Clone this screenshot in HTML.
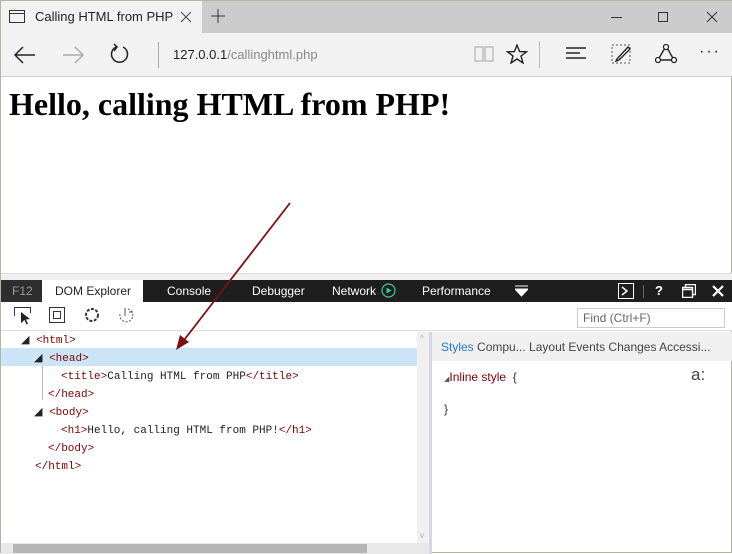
<!DOCTYPE html>
<html><head><style>
*{margin:0;padding:0;box-sizing:border-box}
body{width:732px;height:553px;overflow:hidden;position:relative;background:#fff;font-family:"Liberation Sans",sans-serif;border:1px solid #b8b3a0}
.a{position:absolute}
.mono{font-family:"Liberation Mono",monospace;font-size:11px;color:#222}
.t{color:#800000}
</style></head><body>
<div class="a" style="left:0;top:0;width:732px;height:32px;background:#cccccc"></div>
<div class="a" style="left:0;top:0;width:201px;height:32px;background:#f2f2f2"></div>
<svg class="a" style="left:8px;top:9px" width="16" height="14"><rect x="0.5" y="0.5" width="15" height="12" fill="none" stroke="#333"/><line x1="0" y1="3.5" x2="16" y2="3.5" stroke="#333"/></svg>
<div class="a" style="left:34px;top:8px;font-size:13px;color:#222">Calling HTML from PHP</div>
<svg class="a" style="left:179px;top:10px" width="12" height="12"><path d="M1 1L11 11M11 1L1 11" stroke="#444"/></svg>
<svg class="a" style="left:210px;top:8px" width="14" height="14"><path d="M7 0V14M0 7H14" stroke="#333"/></svg>
<svg class="a" style="left:610px;top:10px" width="110" height="12"><path d="M0 6.5H11" stroke="#333"/><rect x="47.5" y="1.5" width="9" height="9" fill="none" stroke="#333"/><path d="M96 1L106 11M106 1L96 11" stroke="#333"/></svg>
<div class="a" style="left:0;top:32px;width:732px;height:44px;background:#f2f2f2;border-bottom:1px solid #d0d0d0"></div>
<svg class="a" style="left:12px;top:44px" width="24" height="20"><path d="M22 10H2M10 2L2 10L10 18" fill="none" stroke="#222" stroke-width="1.5"/></svg>
<svg class="a" style="left:60px;top:44px" width="24" height="20"><path d="M2 10H22M14 2L22 10L14 18" fill="none" stroke="#aaa" stroke-width="1.5"/></svg>
<svg class="a" style="left:108px;top:42px" width="22" height="22"><path d="M7 4A8 8 0 1 0 14 4" fill="none" stroke="#222" stroke-width="1.5"/><path d="M5 1L8 4L5 8" fill="none" stroke="#222" stroke-width="1.5"/></svg>
<div class="a" style="left:157px;top:41px;width:1px;height:26px;background:#aaa"></div>
<div class="a" style="left:172px;top:46px;font-size:13px;color:#222">127.0.0.1<span style="color:#888">/callinghtml.php</span></div>
<svg class="a" style="left:473px;top:44px" width="20" height="18"><path d="M1 2H9V16H1ZM11 2H19V16H11Z" fill="none" stroke="#bbb" stroke-width="1.4"/></svg>
<svg class="a" style="left:505px;top:43px" width="22" height="20"><path d="M11 1L13.6 7.6L20.5 7.8L15 12L17 19L11 15L5 19L7 12L1.5 7.8L8.4 7.6Z" fill="none" stroke="#222" stroke-width="1.4"/></svg>
<div class="a" style="left:538px;top:40px;width:1px;height:27px;background:#bbb"></div>
<svg class="a" style="left:565px;top:46px" width="22" height="14"><path d="M0 1H20M0 6H14M0 11H20" stroke="#222" stroke-width="1.4"/></svg>
<svg class="a" style="left:610px;top:43px" width="22" height="20"><rect x="1" y="1" width="18" height="18" fill="none" stroke="#555" stroke-dasharray="2 2"/><path d="M6 15L17 3L19 5L8 16L5 17Z" fill="#fff" stroke="#222" stroke-width="1.4"/></svg>
<svg class="a" style="left:653px;top:42px" width="24" height="22"><path d="M12 3L4 17H20Z" fill="none" stroke="#222" stroke-width="1.4"/><circle cx="12" cy="4" r="2.5" fill="#fff" stroke="#222" stroke-width="1.3"/><circle cx="4" cy="17" r="2.5" fill="#fff" stroke="#222" stroke-width="1.3"/><circle cx="20" cy="17" r="2.5" fill="#fff" stroke="#222" stroke-width="1.3"/></svg>
<div class="a" style="left:698px;top:42px;font-size:16px;color:#222;letter-spacing:2px">···</div>
<div class="a" style="left:8px;top:85px;font-family:'Liberation Serif',serif;font-weight:bold;font-size:32px;color:#000">Hello, calling HTML from PHP!</div>
<div class="a" style="left:0;top:272px;width:732px;height:7px;background:#f0f0f0;border-top:1px solid #ddd"></div>
<div class="a" style="left:0;top:279px;width:732px;height:22px;background:#1e1e1e"></div>
<div class="a" style="left:0;top:279px;width:41px;height:22px;background:#2e2e2e;color:#999;font-size:12px;padding:4px 0 0 11px">F12</div>
<div class="a" style="left:41px;top:279px;width:101px;height:22px;background:#fff;color:#222;font-size:12px;padding:4px 0 0 13px">DOM Explorer</div>
<div class="a" style="left:166px;top:283px;color:#fff;font-size:12px">Console</div>
<div class="a" style="left:251px;top:283px;color:#fff;font-size:12px">Debugger</div>
<div class="a" style="left:331px;top:283px;color:#fff;font-size:12px">Network</div>
<svg class="a" style="left:380px;top:282px" width="15" height="15"><circle cx="7.5" cy="7.5" r="6.5" fill="none" stroke="#3c9" stroke-width="1.2"/><path d="M5.5 4.5L10.5 7.5L5.5 10.5Z" fill="#3c9"/></svg>
<div class="a" style="left:421px;top:283px;color:#fff;font-size:12px">Performance</div>
<svg class="a" style="left:514px;top:284px" width="13" height="12"><path d="M0 1H13M0 4H13L6.5 11Z" fill="#fff" stroke="#fff"/></svg>
<svg class="a" style="left:617px;top:282px" width="16" height="16"><rect x="0.5" y="0.5" width="15" height="15" fill="none" stroke="#fff"/><path d="M4 4L9 8L4 12" fill="none" stroke="#fff" stroke-width="1.5"/></svg>
<div class="a" style="left:642px;top:284px;width:1px;height:13px;background:#666"></div>
<div class="a" style="left:654px;top:282px;color:#fff;font-weight:bold;font-size:13px">?</div>
<svg class="a" style="left:681px;top:283px" width="14" height="14"><path d="M3.5 3.5V0.5H13.5V10.5H10.5M0.5 3.5H10.5V13.5H0.5Z M0.5 5.5H10.5" fill="none" stroke="#fff" stroke-width="1.4"/></svg>
<svg class="a" style="left:711px;top:284px" width="12" height="12"><path d="M1 1L11 11M11 1L1 11" stroke="#fff" stroke-width="2.2"/></svg>
<div class="a" style="left:0;top:301px;width:732px;height:29px;background:#fff;border-bottom:1px solid #ddd"></div>
<svg class="a" style="left:13px;top:306px" width="20" height="20"><path d="M0.5 9V0.5H16.5V6" fill="none" stroke="#333"/><path d="M7 5L16 12L12 12.5L14 17L12.5 17.5L10.5 13L7 16Z" fill="#222"/></svg>
<svg class="a" style="left:48px;top:306px" width="16" height="16"><rect x="0.5" y="0.5" width="15" height="15" fill="none" stroke="#333"/><rect x="4.5" y="4.5" width="7" height="7" fill="none" stroke="#333"/></svg>
<svg class="a" style="left:83px;top:306px" width="16" height="16"><circle cx="8" cy="8" r="6" fill="none" stroke="#333" stroke-width="2" stroke-dasharray="3 1.5"/></svg>
<svg class="a" style="left:116px;top:305px" width="18" height="18"><path d="M11 3A6.5 6.5 0 1 1 3 8" fill="none" stroke="#555" stroke-dasharray="2 1.5"/><path d="M8 2V10" stroke="#555"/><path d="M12 6L16 6" stroke="#555"/></svg>
<div class="a" style="left:576px;top:307px;width:148px;height:20px;border:1px solid #ccc;font-size:12px;color:#666;padding:2px 0 0 5px">Find (Ctrl+F)</div>
<div class="a" style="left:0;top:347px;width:416px;height:18px;background:#cce4f7"></div>
<div class="a" style="left:41px;top:365px;width:1px;height:34px;background:#bbb"></div>
<div class="a mono" style="left:20px;top:331px;line-height:18px">
<div>◢ <span class="t">&lt;html&gt;</span></div>
<div style="padding-left:13px">◢ <span class="t">&lt;head&gt;</span></div>
<div style="padding-left:40px"><span class="t">&lt;title&gt;</span>Calling HTML from PHP<span class="t">&lt;/title&gt;</span></div>
<div style="padding-left:27px"><span class="t">&lt;/head&gt;</span></div>
<div style="padding-left:13px">◢ <span class="t">&lt;body&gt;</span></div>
<div style="padding-left:40px"><span class="t">&lt;h1&gt;</span>Hello, calling HTML from PHP!<span class="t">&lt;/h1&gt;</span></div>
<div style="padding-left:27px"><span class="t">&lt;/body&gt;</span></div>
<div style="padding-left:14px"><span class="t">&lt;/html&gt;</span></div>
</div>
<div class="a" style="left:416px;top:331px;width:12px;height:211px;background:#f0f0f0"></div>
<div class="a" style="left:419px;top:333px;font-size:8px;color:#aaa">^</div>
<div class="a" style="left:419px;top:530px;font-size:8px;color:#aaa">v</div>
<div class="a" style="left:428px;top:331px;width:3px;height:222px;background:#d4d7e2"></div>
<div class="a" style="left:0;top:542px;width:428px;height:11px;background:#e8e8e8"></div>
<div class="a" style="left:12px;top:543px;width:354px;height:9px;background:#b5b5b5"></div>
<div class="a" style="left:431px;top:331px;width:301px;height:29px;background:#f0f0f0"></div>
<div class="a" style="left:440px;top:339px;font-size:12px;color:#444;white-space:nowrap"><span style="color:#1e7bc6">Styles</span> Compu... Layout Events Changes Accessi...</div>
<div class="a" style="left:443px;top:369px;font-size:12px;color:#800000"><span style="font-size:7px;color:#555">◢</span>Inline style <span style="color:#333">&nbsp;{</span></div>
<div class="a" style="left:690px;top:364px;font-size:17px;color:#444">a:</div>
<div class="a" style="left:443px;top:401px;font-size:12px;color:#333">}</div>
<svg class="a" style="left:0;top:0" width="732" height="553"><path d="M289 202L180 343" stroke="#7a1010" stroke-width="1.8"/><path d="M175 349L179 334L188 341Z" fill="#7a1010"/></svg>
</body></html>
